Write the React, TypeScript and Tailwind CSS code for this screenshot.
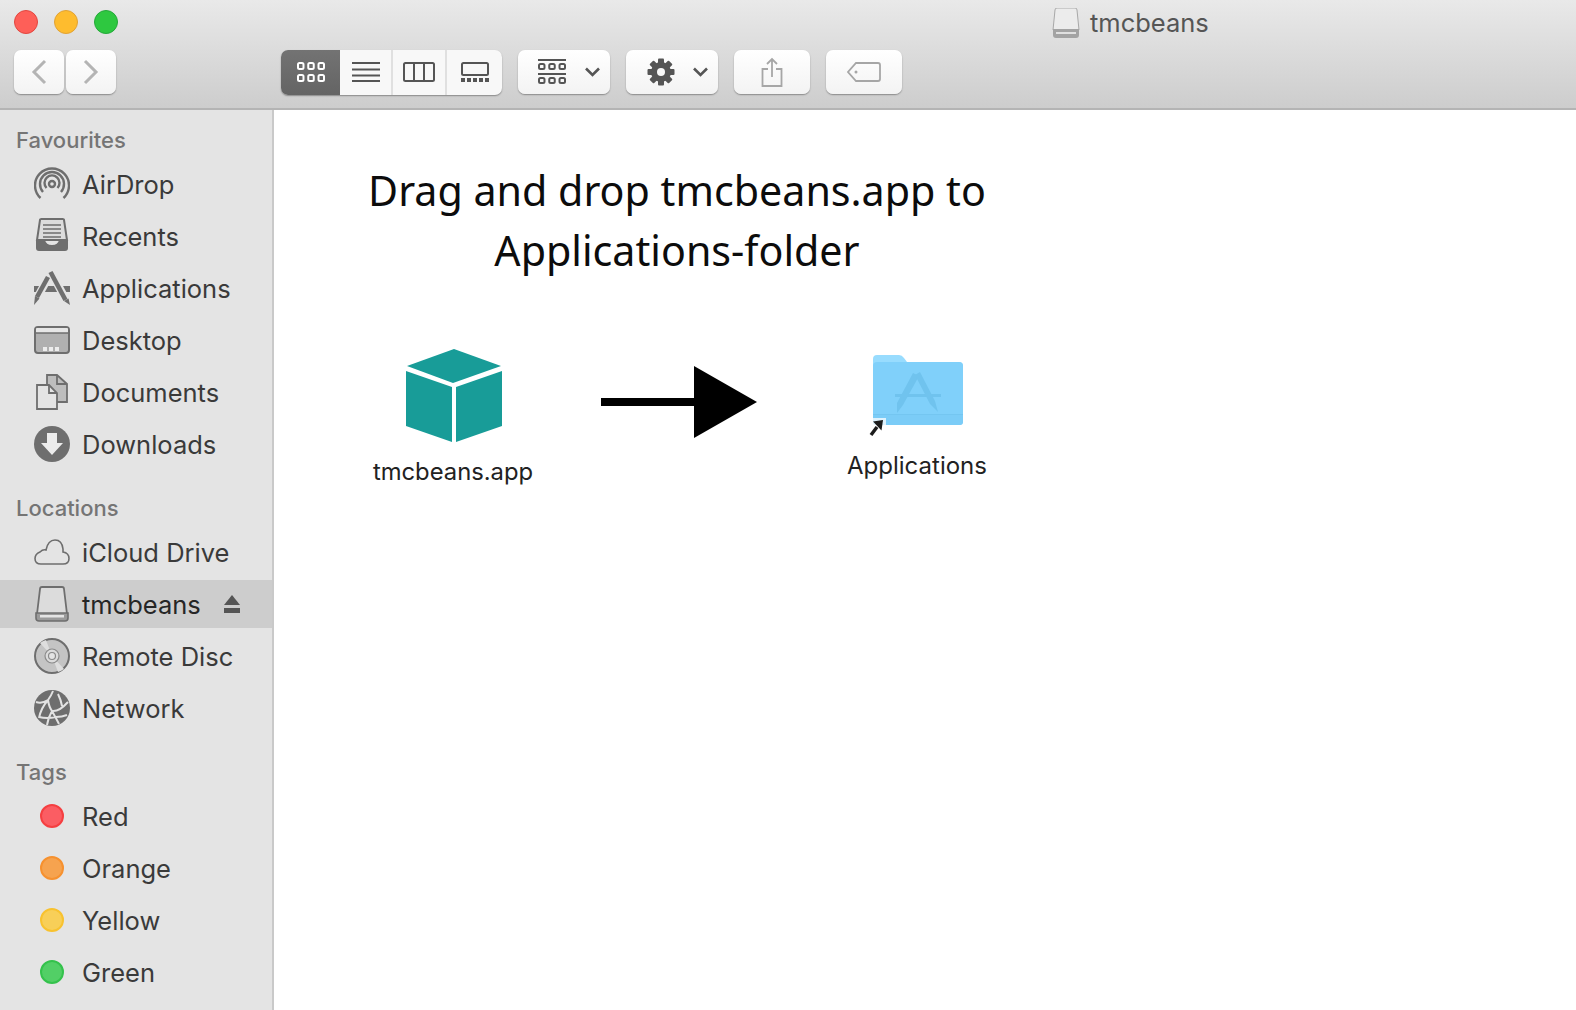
import { ReactNode } from 'react'

const sidebarText = 'font-["Inter","Liberation_Sans",sans-serif]'

function ToolButton({ className, children }: { className: string; children: ReactNode }) {
  return (
    <div
      className={`flex h-[44px] items-center justify-center rounded-[7px] bg-gradient-to-b from-[#ffffff] to-[#f3f3f3] shadow-[0_1px_1.5px_rgba(0,0,0,0.35)] ${className}`}
    >
      {children}
    </div>
  )
}

function Chevron({ dir, color = '#b4b4b4' }: { dir: 'left' | 'right'; color?: string }) {
  return (
    <svg width="16" height="26" viewBox="0 0 16 26" fill="none" stroke={color} strokeWidth="3">
      <path d={dir === 'left' ? 'M14 2 L3 13 L14 24' : 'M2 2 L13 13 L2 24'} />
    </svg>
  )
}

function SmallChevron() {
  return (
    <svg width="15" height="10" viewBox="0 0 15 10" fill="none" stroke="#555" strokeWidth="2.6">
      <path d="M1 1.5 L7.5 8 L14 1.5" />
    </svg>
  )
}

function DotRow({ y, color, h = 6 }: { y: number; color: string; h?: number }) {
  return (
    <g fill="none" stroke={color} strokeWidth="2">
      <rect x="1" y={y} width="5.5" height={h} rx="1.5" />
      <rect x="11.25" y={y} width="5.5" height={h} rx="1.5" />
      <rect x="21.5" y={y} width="5.5" height={h} rx="1.5" />
    </g>
  )
}

function Toolbar() {
  return (
    <div className="flex h-[110px] shrink-0 flex-col border-b-2 border-[#b4b4b4] bg-gradient-to-b from-[#e9e9e9] to-[#cdcdcd]">
      <div className="relative flex h-[50px] shrink-0 items-center pl-[14px]">
        <div className="flex gap-[16px] pb-[6px]">
          <span className="h-[24px] w-[24px] rounded-full border border-[#e2463f] bg-[#fe5f58]" />
          <span className="h-[24px] w-[24px] rounded-full border border-[#e1a235] bg-[#febc2e]" />
          <span className="h-[24px] w-[24px] rounded-full border border-[#25a83a] bg-[#2ec840]" />
        </div>
        <div className="absolute top-[7px] left-[1052px] flex items-center gap-[10px]">
          <svg width="28" height="30" viewBox="0 0 28 30">
            <path d="M3 2 Q3 0 5 0 H23 Q25 0 25 2 L27 22 H1 Z" fill="#ececec" stroke="#a8a8a8" />
            <path d="M1 21 H27 V27 Q27 30 24 30 H4 Q1 30 1 27 Z" fill="#a3a3a3" />
            <rect x="4" y="24" width="20" height="2" fill="#e0e0e0" />
          </svg>
          <span className={`${sidebarText} text-[25.5px] leading-[32px] text-[#555555]`}>tmcbeans</span>
        </div>
      </div>
      <div className="flex h-[44px] shrink-0 items-center pl-[14px]">
        <ToolButton className="w-[50px]">
          <Chevron dir="left" />
        </ToolButton>
        <ToolButton className="ml-[2px] w-[50px]">
          <Chevron dir="right" />
        </ToolButton>
        <div className="ml-[165px] flex h-[45px] w-[221px] overflow-hidden rounded-[7px] bg-[#f8f8f8] shadow-[0_1px_1.5px_rgba(0,0,0,0.35)]">
          <div className="flex w-[59px] items-center justify-center bg-gradient-to-b from-[#737373] to-[#646464]">
            <svg width="28" height="20" viewBox="0 0 28 20">
              <DotRow y={1} color="#ffffff" />
              <DotRow y={13} color="#ffffff" />
            </svg>
          </div>
          <div className="flex w-[53px] items-center justify-center border-r-2 border-[#e0e0e0]">
            <svg width="28" height="20" viewBox="0 0 28 20" stroke="#555" strokeWidth="2">
              <path d="M0 1 H28 M0 7.5 H28 M0 13.5 H28 M0 19 H28" />
            </svg>
          </div>
          <div className="flex w-[54px] items-center justify-center border-r-2 border-[#e0e0e0]">
            <svg width="32" height="20" viewBox="0 0 32 20" fill="none" stroke="#555" strokeWidth="2">
              <rect x="1" y="1" width="30" height="18" rx="1.5" />
              <path d="M11 1 V19 M21 1 V19" />
            </svg>
          </div>
          <div className="flex flex-1 items-center justify-center">
            <svg width="28" height="21" viewBox="0 0 28 21">
              <rect x="1" y="1" width="26" height="12" rx="1.5" fill="none" stroke="#555" strokeWidth="2" />
              <path d="M0 18 H28" stroke="#555" strokeWidth="4" strokeDasharray="4 2" />
            </svg>
          </div>
        </div>
        <ToolButton className="ml-[16px] w-[92px] justify-start gap-[19px] pl-[20px]">
          <svg width="28" height="26" viewBox="0 0 28 26">
            <path d="M0 1 H28 M0 15 H28" stroke="#555" strokeWidth="2" />
            <DotRow y={5} color="#555" h={5} />
            <DotRow y={19} color="#555" h={5} />
          </svg>
          <SmallChevron />
        </ToolButton>
        <ToolButton className="ml-[16px] w-[92px] justify-start gap-[18px] pl-[21px]">
          <svg width="28" height="28" viewBox="0 0 28 28" fill="#555">
            <g>
              {[0, 45, 90, 135].map((a) => (
                <rect key={a} x="11" y="0.5" width="6" height="27" rx="1" transform={`rotate(${a} 14 14)`} />
              ))}
            </g>
            <circle cx="14" cy="14" r="10" />
            <circle cx="14" cy="14" r="4" fill="#f8f8f8" />
          </svg>
          <SmallChevron />
        </ToolButton>
        <ToolButton className="ml-[16px] w-[76px]">
          <svg width="22" height="30" viewBox="0 0 22 30" fill="none" stroke="#a6a6a6" strokeWidth="1.8">
            <path d="M11 20 V2 M6 7 L11 2 L16 7 M7 12 H1.5 V29 H20.5 V12 H15" />
          </svg>
        </ToolButton>
        <ToolButton className="ml-[16px] w-[76px]">
          <svg width="34" height="20" viewBox="0 0 34 20" fill="none" stroke="#a6a6a6" strokeWidth="1.8">
            <path d="M9 1 H31 Q33 1 33 3 V17 Q33 19 31 19 H9 L1 10 Z" />
            <circle cx="9" cy="10" r="1.5" fill="#a6a6a6" stroke="none" />
          </svg>
        </ToolButton>
      </div>
    </div>
  )
}

const iconGray = '#6e6e6e'

function AirDropIcon() {
  return (
    <svg width="36" height="36" viewBox="0 0 36 36" fill="none" stroke={iconGray} strokeWidth="2.4">
      <circle cx="18" cy="18" r="3" />
      <path d="M12.5 22 A7.5 7.5 0 1 1 23.5 22" />
      <path d="M9 26 A12 12 0 1 1 27 26" />
      <path d="M6.5 32 A17 17 0 1 1 29.5 32" />
    </svg>
  )
}

function RecentsIcon() {
  return (
    <svg width="36" height="36" viewBox="0 0 36 36">
      <path d="M6 2 Q6 1 7.5 1 H28.5 Q30 1 30 2 L33 22 H3 Z" fill="#dcdcdc" stroke={iconGray} strokeWidth="2" />
      <path d="M9 7 H27 M9 11 H27 M9 15 H27 M9 19 H27" stroke={iconGray} strokeWidth="1.6" />
      <path d="M2 22 H11 Q12 27 18 27 Q24 27 25 22 H34 V30 Q34 33 31 33 H5 Q2 33 2 30 Z" fill={iconGray} />
    </svg>
  )
}

function ApplicationsIcon() {
  return (
    <svg width="36" height="36" viewBox="0 0 36 36">
      <path d="M0 16 H36 V22 H0 Z" fill={iconGray} />
      <path d="M16.5 1 L33 32" stroke="#e4e4e4" strokeWidth="8" />
      <path d="M16.5 2 L31.5 30" stroke={iconGray} strokeWidth="4.6" />
      <path d="M30 31 L34.5 28.5 L36 35 Z" fill={iconGray} />
      <path d="M14 8 L3 28" stroke="#e4e4e4" strokeWidth="8" />
      <path d="M14 7 L3 27" stroke={iconGray} strokeWidth="4.6" />
      <path d="M1 26 L5.5 28.5 L0 35 Z" fill={iconGray} />
    </svg>
  )
}

function DesktopIcon() {
  return (
    <svg width="36" height="36" viewBox="0 0 36 36">
      <rect x="1" y="5" width="34" height="26" rx="3" fill="#b0b0b0" stroke={iconGray} strokeWidth="2" />
      <rect x="2" y="6" width="32" height="5" rx="1" fill="#e6e6e6" />
      <path d="M2 11 H34" stroke={iconGray} strokeWidth="1.5" />
      <path d="M9 27 H27" stroke="#ececec" strokeWidth="4" strokeDasharray="4 2" />
    </svg>
  )
}

function DocumentsIcon() {
  return (
    <svg width="36" height="36" viewBox="0 0 36 36" strokeWidth="1.8" stroke={iconGray}>
      <path d="M13 1 H23 L33 10 V28 H13 Z" fill="#bdbdbd" />
      <path d="M3 11 H15 L23 19 V35 H3 Z" fill="#e4e4e4" />
      <path d="M15 11 V19 H23 M23 1 V10 H33" fill="none" />
    </svg>
  )
}

function DownloadsIcon() {
  return (
    <svg width="36" height="36" viewBox="0 0 36 36">
      <circle cx="18" cy="18" r="18" fill={iconGray} />
      <path d="M13 7 H23 V17 H29 L18 29 L7 17 H13 Z" fill="#ececec" />
    </svg>
  )
}

function CloudIcon() {
  return (
    <svg width="36" height="26" viewBox="0 0 36 26" fill="none" stroke={iconGray} strokeWidth="1.6">
      <path d="M7 25 Q1 25 1 19.5 Q1 15 6 13 Q9 10 12 11 Q14 1 21 1 Q28 1 29 10 Q29 13 29 13 Q35 14 35 19.5 Q35 25 29 25 Z" />
    </svg>
  )
}

function DriveIcon() {
  return (
    <svg width="36" height="36" viewBox="0 0 36 36">
      <path d="M6 3 Q6 1 8 1 H28 Q30 1 30 3 L33 28 H3 Z" fill="#dcdcdc" stroke={iconGray} strokeWidth="1.8" />
      <path d="M2 27 H34 V32 Q34 35 31 35 H5 Q2 35 2 32 Z" fill="#9a9a9a" stroke={iconGray} strokeWidth="1.6" />
      <rect x="6" y="29" width="24" height="2.5" fill="#e4e4e4" />
    </svg>
  )
}

function DiscIcon() {
  return (
    <svg width="36" height="36" viewBox="0 0 36 36">
      <circle cx="18" cy="18" r="17" fill="#c4c4c4" stroke={iconGray} strokeWidth="2" />
      <path d="M18 18 L6 5 A17 17 0 0 1 12 2 Z M18 18 L30 31 A17 17 0 0 1 24 34 Z" fill="#dedede" />
      <circle cx="18" cy="18" r="7" fill="#dcdcdc" stroke="#8a8a8a" strokeWidth="1.2" />
      <circle cx="18" cy="18" r="3.5" fill="#e4e4e4" stroke="#8a8a8a" strokeWidth="1.2" />
    </svg>
  )
}

function NetworkIcon() {
  return (
    <svg width="36" height="36" viewBox="0 0 36 36">
      <circle cx="18" cy="18" r="18" fill={iconGray} />
      <path
        d="M2 12 Q8 14 14 10 Q17 6 19 1 M14 10 Q15 17 18 21 Q25 22 34 12 M24 4 Q27 10 28 16 M18 21 Q14 28 13 35 M18 21 Q22 28 25 34 M14 10 Q7 18 5 28 M5 27 Q13 29 22 27 Q28 27 33 25"
        fill="none"
        stroke="#e2e2e2"
        strokeWidth="2"
      />
    </svg>
  )
}

function Eject() {
  return (
    <svg width="16" height="18" viewBox="0 0 16 18" fill="#555">
      <path d="M8 0 L16 10 H0 Z" />
      <rect y="13" width="16" height="5" />
    </svg>
  )
}

function SectionLabel({ label, className }: { label: string; className: string }) {
  return (
    <div className={`flex h-[38px] items-center pl-[16px] ${sidebarText} text-[22px] font-medium text-[#757575] ${className}`}>
      {label}
    </div>
  )
}

function Row({ icon, label }: { icon: ReactNode; label: string }) {
  return (
    <div className={`flex h-[52px] items-center ${sidebarText} text-[25.5px] text-[#3a3a3a]`}>
      <div className="mb-[2px] ml-[34px] flex w-[36px] justify-center">{icon}</div>
      <span className="ml-[12px]">{label}</span>
    </div>
  )
}

function TagRow({ label, fill, ring }: { label: string; fill: string; ring: string }) {
  return (
    <Row
      label={label}
      icon={
        <span className="h-[24px] w-[24px] rounded-full border-2" style={{ backgroundColor: fill, borderColor: ring }} />
      }
    />
  )
}

function Sidebar() {
  return (
    <div className="w-[274px] shrink-0 overflow-hidden border-r-2 border-[#c9c9c9] bg-[#e4e4e4]">
      <SectionLabel label="Favourites" className="mt-[11px]" />
      <Row icon={<AirDropIcon />} label="AirDrop" />
      <Row icon={<RecentsIcon />} label="Recents" />
      <Row icon={<ApplicationsIcon />} label="Applications" />
      <Row icon={<DesktopIcon />} label="Desktop" />
      <Row icon={<DocumentsIcon />} label="Documents" />
      <Row icon={<DownloadsIcon />} label="Downloads" />
      <SectionLabel label="Locations" className="mt-[18px]" />
      <Row icon={<CloudIcon />} label="iCloud Drive" />
      <div className={`mt-[1px] mb-[3px] flex h-[48px] items-center bg-[#cdcdcd] ${sidebarText} text-[25.5px] text-[#262626]`}>
        <div className="ml-[34px] flex w-[36px] justify-center">
          <DriveIcon />
        </div>
        <span className="mt-[2px] ml-[12px]">tmcbeans</span>
        <div className="ml-[23px]">
          <Eject />
        </div>
      </div>
      <Row icon={<DiscIcon />} label="Remote Disc" />
      <Row icon={<NetworkIcon />} label="Network" />
      <SectionLabel label="Tags" className="mt-[18px]" />
      <TagRow label="Red" fill="#fb5d63" ring="#f53f41" />
      <TagRow label="Orange" fill="#f6a34f" ring="#f6912f" />
      <TagRow label="Yellow" fill="#f8cf58" ring="#f8c22f" />
      <TagRow label="Green" fill="#52cf66" ring="#34c24c" />
    </div>
  )
}

function Canvas() {
  return (
    <div className="min-w-0 flex-1 bg-white">
      <div className='mt-[50px] ml-[53px] w-[700px] text-center font-["Noto_Sans",sans-serif] text-[41.2px] leading-[60px] font-normal text-[#0c0c0c]'>
        <div>Drag and drop tmcbeans.app to</div>
        <div>Applications-folder</div>
      </div>
      <div className={`mt-[69px] ml-[80px] flex items-start ${sidebarText} text-[24px] leading-[32px] text-[#222222]`}>
        <div className="flex w-[200px] flex-col items-center">
          <svg width="96" height="93" viewBox="0 0 96 93" fill="#189c98">
            <path d="M48 0 L95 17 L47 34 L1 17 Z" />
            <path d="M0 22 L46 38 V93 L0 77 Z" />
            <path d="M50 38 L96 22 V77 L50 93 Z" />
          </svg>
          <span className="mt-[14px] -ml-[2px] text-[23.8px]">tmcbeans.app</span>
        </div>
        <svg className="mt-[17px] ml-[47px]" width="156" height="72" viewBox="0 0 156 72">
          <rect x="0" y="32" width="94" height="8" />
          <path d="M93 0 L156 36 L93 72 Z" />
        </svg>
        <div className="ml-[60px] flex w-[200px] flex-col items-center pt-[6px]">
          <div className="relative ml-[2px] h-[70px] w-[90px]">
            <svg width="90" height="70" viewBox="0 0 90 70">
              <path d="M0 4 Q0 0 4 0 H26 Q29 0 31 3 L34 7 H86 Q90 7 90 11 V30 H0 Z" fill="#98dcfe" />
              <path d="M0 11 Q0 7 4 7 H86 Q90 7 90 11 V66 Q90 70 86 70 H4 Q0 70 0 66 Z" fill="#80d0fa" />
              <rect x="0" y="59" width="90" height="11" rx="3" fill="#7bccf7" />
              <rect x="0" y="59" width="90" height="1" fill="#74c6f1" />
              <g fill="#70c3ee">
                <rect x="22" y="39" width="46" height="3" />
                <path d="M40 18 L46 21 L30 50 L24 58 L24 48 Z" />
                <path d="M42 20 L47 17 L62 46 L65 57 L57 49 Z" />
              </g>
            </svg>
            <svg className="absolute top-[63px] -left-[5px]" width="18" height="19" viewBox="0 0 18 19">
              <path d="M0 0 H18 V9 L9 19 H0 Z" fill="#ffffff" fillOpacity="0.75" />
              <path d="M3 17 L9 9" stroke="#1c1c1c" strokeWidth="3.4" />
              <path d="M5 3.5 L15 2 L13.5 12.5 Z" fill="#1c1c1c" />
            </svg>
          </div>
          <span className="mt-[25px]">Applications</span>
        </div>
      </div>
    </div>
  )
}

export default function App() {
  return (
    <div className="flex h-[1010px] w-[1576px] flex-col overflow-hidden bg-white">
      <Toolbar />
      <div className="flex min-h-0 flex-1">
        <Sidebar />
        <Canvas />
      </div>
    </div>
  )
}
